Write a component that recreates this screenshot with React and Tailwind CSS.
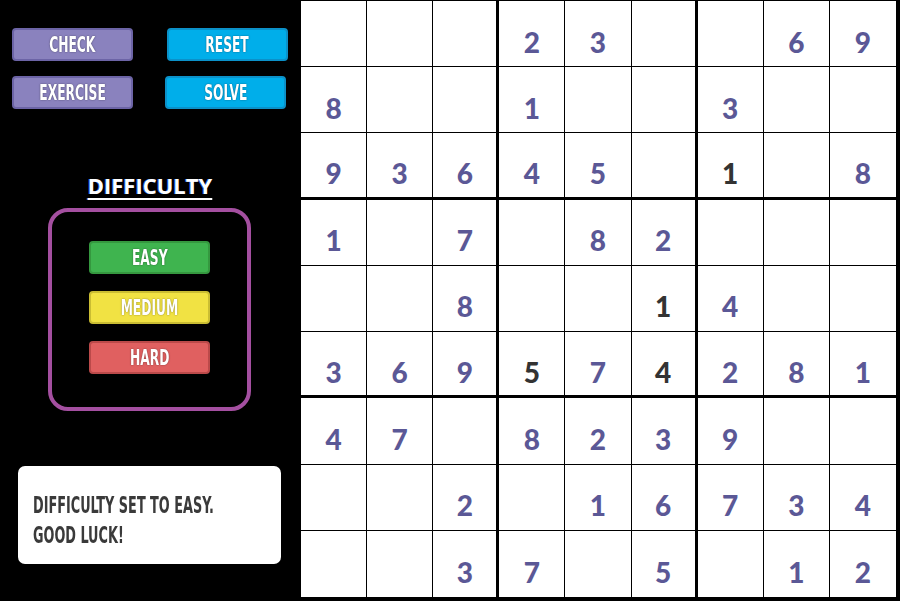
import React from 'react'

let board = [
  ['', '', '', '2', '3', '', '', '6', '9'],
  ['8', '', '', '1', '', '', '3', '', ''],
  ['9', '3', '6', '4', '5', '', '1*', '', '8'],
  ['1', '', '7', '', '8', '2', '', '', ''],
  ['', '', '8', '', '', '1*', '4', '', ''],
  ['3', '6', '9', '5*', '7', '4*', '2', '8', '1'],
  ['4', '7', '', '8', '2', '3', '9', '', ''],
  ['', '', '2', '', '1', '6', '7', '3', '4'],
  ['', '', '3', '7', '', '5', '', '1', '2'],
]

let btnFont = "font-['DejaVu_Sans_Condensed','DejaVu_Sans',sans-serif] font-bold font-stretch-condensed"
let btnText = 'inline-block scale-x-[0.62] text-[22px] leading-none text-white [text-shadow:0_0_2px_rgba(0,0,0,0.55)]'

function Btn({ label, className }) {
  return (
    <button className={`h-[33px] w-[121px] rounded-[4px] border-2 flex items-center justify-center ${btnFont} ${className}`}>
      <span className={btnText}>{label}</span>
    </button>
  )
}

function Cell({ value, r, c }) {
  let dark = value.endsWith('*')
  let digit = value.replace('*', '')
  let right = c === 8 ? '' : (c === 2 || c === 5 ? 'border-r-[3px]' : 'border-r')
  let bottom = r === 8 ? '' : (r === 2 || r === 5 ? 'border-b-[3px]' : 'border-b')
  return (
    <div className={`flex items-center justify-center pt-[16px] border-black ${right} ${bottom}`}>
      <span className={`font-['Lato',sans-serif] font-black text-[28px] leading-none ${dark ? 'text-[#333333]' : 'text-[#5b5896]'}`}>
        {digit}
      </span>
    </div>
  )
}

export default function App() {
  return (
    <div className="w-[900px] h-[601px] flex bg-black overflow-hidden">
      <div className="w-[300px] flex flex-col">
        <div className="flex pl-[12px] pt-[28px] gap-[34px]">
          <Btn label="CHECK" className="bg-[#8a82be] border-[#6c64a6]" />
          <Btn label="RESET" className="bg-[#00aeea] border-[#0b91c9]" />
        </div>
        <div className="flex pl-[12px] pt-[15px] gap-[32px]">
          <Btn label="EXERCISE" className="bg-[#8a82be] border-[#6c64a6]" />
          <Btn label="SOLVE" className="bg-[#00aeea] border-[#0b91c9]" />
        </div>

        <div className="mt-[62px] flex justify-center">
          <span className="font-['Open_Sans',sans-serif] font-bold text-[22px] leading-[28px] text-white underline underline-offset-[4px] decoration-2 [text-shadow:-1px_0_0_#2f5fd0]">
            DIFFICULTY
          </span>
        </div>

        <div className="ml-[48px] mt-[9px] w-[203px] h-[203px] border-4 border-[#a44fa0] rounded-[20px] flex flex-col items-center pt-[29px] gap-[17px]">
          <Btn label="EASY" className="bg-[#3fb44f] border-[#35983f]" />
          <Btn label="MEDIUM" className="bg-[#f1e243] border-[#cabd33]" />
          <Btn label="HARD" className="bg-[#e06060] border-[#bb4a4a]" />
        </div>

        <div className="ml-[18px] mt-[55px] w-[263px] h-[98px] bg-white rounded-[7px] pl-[15px] pt-[24px]">
          <div className={`${btnFont} text-[23px] leading-[30px] text-[#3a3a3a] origin-left scale-x-[0.62] whitespace-nowrap`}>
            <div>DIFFICULTY SET TO EASY.</div>
            <div>GOOD LUCK!</div>
          </div>
        </div>
      </div>

      <div className="w-[600px] h-[601px] grid grid-cols-9 grid-rows-9 bg-white border-t border-l border-r-4 border-b-4 border-black">
        {board.map(function (row, r) {
          return row.map(function (v, c) {
            return <Cell key={r + '-' + c} value={v} r={r} c={c} />
          })
        })}
      </div>
    </div>
  )
}
